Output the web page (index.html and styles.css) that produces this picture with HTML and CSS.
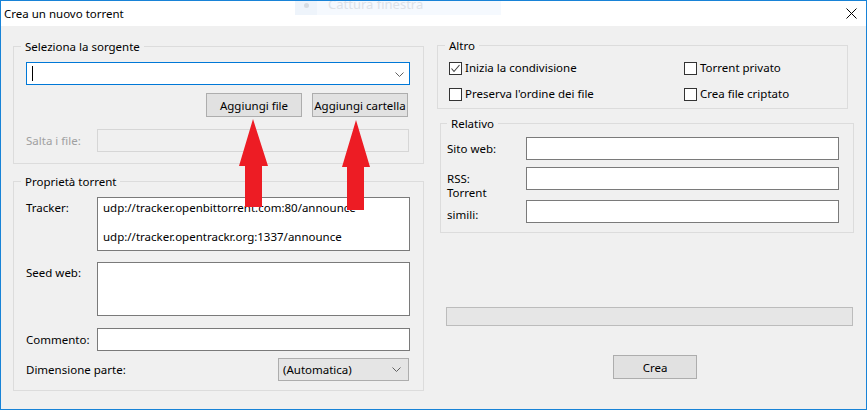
FILE: index.html
```
<!DOCTYPE html>
<html>
<head>
  <meta charset="UTF-8">
  <title>Crea un nuovo torrent</title>
  <link rel="stylesheet" href="styles.css">
</head>
<body>
  <div class="window">

    <div class="titlebar">
      <span class="title">Crea un nuovo torrent</span>
      <div class="ghost">
        <span class="ghost_icon"><i></i></span>
        <span class="ghost_text">Cattura finestra</span>
      </div>
      <svg class="close" width="11" height="11" viewBox="0 0 11 11">
        <path d="M0.5 0.5 L10.5 10.5 M10.5 0.5 L0.5 10.5" stroke="#000" stroke-width="1" fill="none"/>
      </svg>
    </div>

    <div class="content">
      <div class="col col_left">

        <div class="group source">
          <div class="group_title">Seleziona la sorgente</div>
          <div class="combo">
            <span class="caret"></span>
            <svg class="chevron" width="9" height="5" viewBox="0 0 9 5"><path d="M0.5 0.5 L4.5 4.5 L8.5 0.5" stroke="#606060" fill="none"/></svg>
          </div>
          <div class="btn_row">
            <button type="button" class="btn">Aggiungi file</button>
            <button type="button" class="btn">Aggiungi cartella</button>
          </div>
          <div class="row skip">
            <label class="disabled">Salta i file:</label>
            <input type="text" class="field" disabled>
          </div>
        </div>

        <div class="group props">
          <div class="group_title">Proprietà torrent</div>
          <div class="row top">
            <label>Tracker:</label>
            <textarea class="area">udp://tracker.openbittorrent.com:80/announce

udp://tracker.opentrackr.org:1337/announce</textarea>
          </div>
          <div class="row top seeds">
            <label>Seed web:</label>
            <textarea class="area"></textarea>
          </div>
          <div class="row comment">
            <label>Commento:</label>
            <input type="text" class="field">
          </div>
          <div class="row piece">
            <label>Dimensione parte:</label>
            <div class="select">
              <span>(Automatica)</span>
              <svg width="9" height="5" viewBox="0 0 9 5"><path d="M0.5 0.5 L4.5 4.5 L8.5 0.5" stroke="#606060" fill="none"/></svg>
            </div>
          </div>
        </div>

      </div>

      <div class="col col_right">

        <div class="group other">
          <div class="group_title">Altro</div>
          <div class="checks">
            <div class="check"><span class="box"><svg width="11" height="11" viewBox="0 0 11 11"><path d="M1.5 5.5 L4 8.5 L9.5 2" stroke="#404040" stroke-width="1.1" fill="none"/></svg></span>Inizia la condivisione</div>
            <div class="check"><span class="box"></span>Torrent privato</div>
            <div class="check"><span class="box"></span>Preserva l'ordine dei file</div>
            <div class="check"><span class="box"></span>Crea file criptato</div>
          </div>
        </div>

        <div class="group related">
          <div class="group_title">Relativo</div>
          <div class="row">
            <label>Sito web:</label>
            <input type="text" class="field">
          </div>
          <div class="row rss">
            <label>RSS:</label>
            <input type="text" class="field">
          </div>
          <div class="row similar">
            <label class="two_lines">Torrent<br>simili:</label>
            <input type="text" class="field">
          </div>
        </div>

        <div class="progress"></div>
        <button type="button" class="btn create">Crea</button>

      </div>
    </div>

    <!-- frecce rosse disegnate sopra lo screenshot -->
    <svg class="arrows" width="867" height="410" viewBox="0 0 867 410">
      <path d="M253 119 L239 166 L245 166 L245 207 L262 207 L262 166 L268 166 Z" fill="#ed1c24"/>
      <path d="M356 120 L342 167 L347 167 L347 210 L364 210 L364 167 L370 167 Z" fill="#ed1c24"/>
    </svg>
  </div>
</body>
</html>
```

FILE: styles.css
```
body {
  margin: 0;
  font-family: "Noto Sans", "Open Sans", sans-serif;
  font-size: 11.5px;
  color: #000;
}

.window {
  position: relative;
  width: 867px;
  height: 410px;
  box-sizing: border-box;
  border: 1px solid #1883d7;
  background: #f0f0f0;
  overflow: hidden;
}

/* barra del titolo */
.titlebar {
  position: relative;
  height: 25px;
  display: flex;
  align-items: center;
  justify-content: space-between;
  padding: 0 9px 0 3px;
  background: #fff;
}
  .titlebar .title { line-height: 16px; }
  .ghost {
    position: absolute;
    left: 294px;
    top: 0;
    width: 206px;
    height: 14px;
    display: flex;
    background: #f5f9fe;
    overflow: hidden;
  }
    .ghost_icon {
      width: 22px;
      background: #eef4fb;
      position: relative;
    }
      .ghost_icon i {
        position: absolute;
        left: 9px;
        top: 2px;
        width: 5px;
        height: 5px;
        border-radius: 50%;
        background: #d5dbe2;
      }
    .ghost_text {
      margin: -5px 0 0 11px;
      font-size: 13px;
      line-height: 16px;
      color: #dde2e8;
    }

.content {
  display: flex;
  padding-left: 12px;
}
.col_left { width: 411px; }
.col_right { width: 417px; margin-left: 13px; }

/* group box */
.group {
  border: 1px solid #dcdcdc;
}
  .group_title {
    width: fit-content;
    height: 16px;
    line-height: 16px;
    margin: -8px 0 7px -5px;
    padding: 0 4px;
    background: #f0f0f0;
    white-space: nowrap;
  }

.row {
  display: flex;
  align-items: center;
}
  .row label {
    flex: none;
    line-height: 16px;
  }
  .row.top { align-items: flex-start; }
  .row.top label { padding-top: 4px; }
  label.disabled { color: #a0a0a0; }

.field {
  box-sizing: border-box;
  height: 23px;
  margin: 0;
  border: 1px solid #7a7a7a;
  background: #fff;
  outline: none;
  font: inherit;
}
  .field:disabled {
    border-color: #d6d6d6;
    background: #f0f0f0;
  }

.area {
  box-sizing: border-box;
  width: 313px;
  height: 54px;
  margin: 0;
  padding: 3px 5px;
  border: 1px solid #7a7a7a;
  resize: none;
  overflow: hidden;
  outline: none;
  font: inherit;
  line-height: 14.5px;
}

.btn {
  box-sizing: border-box;
  height: 24px;
  margin: 0;
  padding: 0;
  border: 1px solid #adadad;
  background: #e1e1e1;
  font: inherit;
  color: #000;
  white-space: nowrap;
}

/* Seleziona la sorgente */
.source { margin-top: 20px; padding: 0 13px 11px 12px; }
  .combo {
    position: relative;
    box-sizing: border-box;
    width: 384px;
    height: 23px;
    border: 1px solid #0078d7;
    background: #fff;
  }
    .caret {
      position: absolute;
      left: 5px;
      top: 3px;
      width: 1px;
      height: 15px;
      background: #000;
    }
    .chevron {
      position: absolute;
      right: 5px;
      top: 9px;
    }
  .btn_row {
    display: flex;
    justify-content: flex-end;
    gap: 10px;
    margin: 8px 2px 0 0;
  }
    .btn_row .btn { width: 96px; }
  .skip { margin-top: 12px; }
    .skip label { width: 71px; }
    .skip .field { width: 312px; }

/* Proprietà torrent */
.props { margin-top: 17px; padding: 0 13px 9px 12px; }
  .props label { width: 71px; }
  .props .row.top label { padding-top: 3px; }
  .props .seeds { margin-top: 11px; }
  .props .seeds label { padding-top: 4px; }
  .comment { margin-top: 12px; }
    .comment .field { width: 313px; }
  .piece {
    margin-top: 7px;
    justify-content: space-between;
  }
    .piece label { width: auto; }
    .select {
      box-sizing: border-box;
      width: 131px;
      height: 23px;
      margin-right: 1px;
      display: flex;
      align-items: center;
      justify-content: space-between;
      padding: 0 7px 0 4px;
      border: 1px solid #adadad;
      background: #e5e5e5;
    }

/* Altro */
.other { margin-top: 19px; width: 411px; box-sizing: border-box; padding: 0 0 6px 11px; }
  .other .group_title { margin: -8px 0 6px -4px; }
  .checks {
    display: grid;
    grid-template-columns: 235px 1fr;
    row-gap: 10px;
  }
  .check {
    display: flex;
    align-items: center;
    height: 16px;
    line-height: 16px;
  }
    .box {
      box-sizing: border-box;
      width: 13px;
      height: 13px;
      margin-right: 3px;
      border: 1px solid #333;
      background: #fff;
      display: flex;
    }

/* Relativo */
.related { margin: 14px 0 0 3px; padding: 0 0 9px 6px; }
  .related .group_title { margin: -8px 0 5px 0; }
  .related label { width: 79px; }
  .related .field { width: 313px; }
  .related .rss { margin-top: 7px; }
  .related .similar { margin-top: 10px; align-items: flex-start; }
  .two_lines {
    height: 22px;
    margin-top: -18px;
    line-height: 22px !important;
  }

.progress {
  box-sizing: border-box;
  width: 407px;
  height: 19px;
  margin: 74px 0 0 9px;
  border: 1px solid #bcbcbc;
  background: #e6e6e6;
}
.create {
  display: block;
  width: 84px;
  margin: 29px 0 0 176px;
}

.arrows {
  position: absolute;
  left: -1px;
  top: -1px;
  pointer-events: none;
}
```
